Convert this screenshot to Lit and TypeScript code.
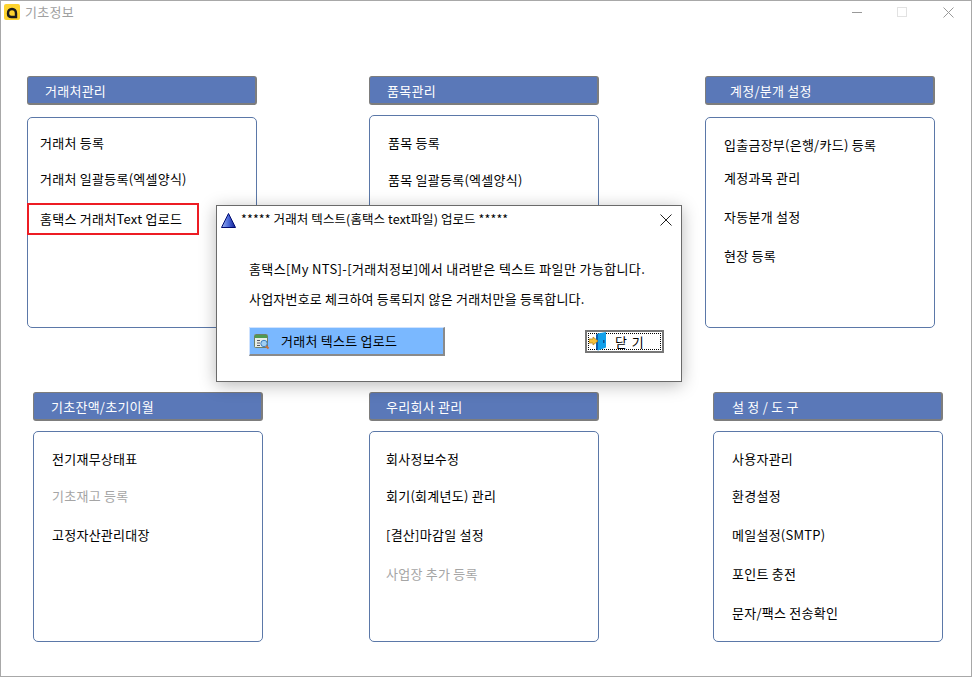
import { LitElement, html, css, svg } from "lit";
import { customElement } from "lit/decorators.js";

interface Item { label: string; y: number; off?: boolean; hl?: boolean }
interface Panel { title: string; ti: number; bi: number; bodyGap: number; top: number; items: Item[] }

const row1: Panel[] = [
  { title: "거래처관리", ti: 17, bi: 12, bodyGap: 12, top: 117, items: [
    { label: "거래처 등록", y: 143 },
    { label: "거래처 일괄등록(엑셀양식)", y: 179 },
    { label: "홈택스 거래처Text 업로드", y: 219, hl: true },
  ]},
  { title: "품목관리", ti: 17, bi: 18, bodyGap: 10, top: 115, items: [
    { label: "품목 등록", y: 143 },
    { label: "품목 일괄등록(엑셀양식)", y: 180 },
  ]},
  { title: "계정/분개 설정", ti: 24, bi: 18, bodyGap: 12, top: 117, items: [
    { label: "입출금장부(은행/카드) 등록", y: 145 },
    { label: "계정과목 관리", y: 178 },
    { label: "자동분개 설정", y: 217 },
    { label: "현장 등록", y: 256 },
  ]},
];
const row2: Panel[] = [
  { title: "기초잔액/초기이월", ti: 17, bi: 18, bodyGap: 10, top: 431, items: [
    { label: "전기재무상태표", y: 459 },
    { label: "기초재고 등록", y: 496, off: true },
    { label: "고정자산관리대장", y: 535 },
  ]},
  { title: "우리회사 관리", ti: 16, bi: 16, bodyGap: 10, top: 431, items: [
    { label: "회사정보수정", y: 459 },
    { label: "회기(회계년도) 관리", y: 496 },
    { label: "[결산]마감일 설정", y: 535 },
    { label: "사업장 추가 등록", y: 574, off: true },
  ]},
  { title: "설 정 / 도 구", ti: 18, bi: 18, bodyGap: 10, top: 431, items: [
    { label: "사용자관리", y: 459 },
    { label: "환경설정", y: 496 },
    { label: "메일설정(SMTP)", y: 535 },
    { label: "포인트 충전", y: 574 },
    { label: "문자/팩스 전송확인", y: 613 },
  ]},
];

const logo = html`<svg width="16" height="16" viewBox="0 0 16 16"><rect width="16" height="16" rx="2" fill="#fdd32f"/><path d="M4 9.500C4 6.500 5.500 5 8 5s4 1.500 4 4.500V13H7.500C5 13 4 11.500 4 9.500Z" fill="none" stroke="#1a1a1a" stroke-width="2.400"/></svg>`;
const tri = html`<svg width="15" height="15" viewBox="0 0 15 15"><defs><linearGradient id="t" x1="0" x2="1"><stop offset="0" stop-color="#9db4f0"/><stop offset=".5" stop-color="#4a68d8"/><stop offset="1" stop-color="#101c90"/></linearGradient></defs><path d="M7.500 .5 14.500 14.500H.5Z" fill="url(#t)" stroke="#000a70"/></svg>`;
const formIcon = html`<svg class="fi" width="16" height="16" viewBox="0 0 16 16"><rect x=".5" y=".5" width="13" height="13" rx="1" fill="#e8eee6" stroke="#6f7f66"/><rect x="1" y="1" width="12" height="3" fill="#4f9a50"/><path d="M3 6.500h3M3 9h3M3 11.500h3" stroke="#556"/><circle cx="10" cy="9.500" r="3.200" fill="#9fcff2" stroke="#3d7fc0"/><path d="M12 12l2.500 2.500" stroke="#c8703a" stroke-width="2"/></svg>`;
const door = html`<svg class="door" width="18" height="19" viewBox="0 0 18 19"><path d="M9 1.500 17 0V15.500L9 18.500Z" fill="#12a0ea"/><path d="M9 1.500V18.500L7 17V2.500Z" fill="#0a5fb0"/><rect x="14" y="8" width="1.500" height="3" fill="#0a4f90"/><path d="M0 7h4V5l5 4-5 4v-2H0Z" fill="#f4c23c" stroke="#a87a18" stroke-width=".7"/></svg>`;

@customElement("app-root")
export class AppRoot extends LitElement {
  static styles = css`
    :host { display: block; width: 972px; height: 677px; overflow: hidden; background: #fff; }
    * { box-sizing: border-box; }
    .win {
      position: relative; width: 972px; height: 677px; background: #fff;
      border: 1px solid #a8a8a8;
      font-family: "Noto Sans CJK KR", "Liberation Sans", sans-serif; font-size: 13px; letter-spacing: .25px; color: #000;
    }
    .bar { height: 24px; display: flex; align-items: center; padding: 0 0 2px 3px; }
    .bar .name { margin-left: 5px; color: #a0a0a0; line-height: 20px; }
    .bar .ctl { margin-left: auto; display: flex; align-items: center; }
    .min { width: 10px; height: 1px; background: #999; }
    .max { width: 10px; height: 10px; border: 1px solid #e2e2e2; margin-left: 35px; }
    .x { margin-left: 36px; margin-right: 17px; display: block; }
    .row { display: flex; }
    .row.a { padding-left: 26px; margin-top: 51px; gap: 112px; }
    .row.a .col:nth-child(2) { margin-right: -6px; }
    .row.b { padding-left: 32px; margin-top: 64px; }
    .row.b .col:nth-child(2) { margin-left: 106px; }
    .row.b .col:nth-child(3) { margin-left: 114px; }
    .col { width: 230px; }
    .head {
      height: 29px; background: #5a78b8; color: #fff; border: 1px solid #7d7d7d;
      border-width: 1px 2px 2px 1px; border-radius: 3px; line-height: 27px; white-space: pre;
    }
    .body { height: 211px; border: 1px solid #5b78a8; border-radius: 5px; }
    .item { height: 20px; line-height: 20px; white-space: pre; }
    .item.off { color: #a5a5a5; }
    .item.hl {
      height: 32px; line-height: 28px; width: 172px; border: 2px solid #ed1c24;
      margin-bottom: -6px; padding-left: 11px; position: relative; top: -6px;
      background: #fff;
    }
    .dlg {
      position: absolute; left: 215px; top: 204px; width: 466px; height: 177px;
      background: #fff; border: 1px solid #6a6a6a; box-shadow: 0 3px 16px rgba(0,0,0,.28);
      padding: 0 0 0 32px;
    }
    .dh {
      margin-left: -28px; padding-top: 3px; display: flex; align-items: center; height: 23px;
      gap: 5px; font-size: 12.5px; letter-spacing: .1px; line-height: 16px; white-space: pre;
    }
    .dh svg { flex: none; margin-top: 2px; }
    .dh .cx { margin-left: auto; margin-right: 9px; display: block; }
    .msg { line-height: 20px; height: 20px; white-space: pre; }
    .msg.one { margin-top: 30px; letter-spacing: .37px; }
    .msg.two { margin-top: 10px; letter-spacing: .2px; }
    .acts { display: flex; align-items: flex-start; margin-top: 18px; }
    .up {
      width: 196px; height: 29px; background: #7ab8ff; border: 1px solid #8a8a8a;
      border-width: 1px 2px 2px 1px; border-top-color: #cfe3ff; border-left-color: #cfe3ff;
      display: flex; align-items: center; gap: 11px; padding: 0 0 0 4px; font: inherit; letter-spacing: inherit; color: #000;
    }
    .up .lb { line-height: 20px; margin-top: -1px; }
    .fi { flex: none; margin-top: 1px; }
    .close {
      position: relative; margin-left: 140px; margin-top: 3px; width: 79px; height: 23px;
      border: 2px solid #777; background: #fff; padding: 1px; color: #000; cursor: default;
    }
    .close .in {
      display: flex; align-items: center; height: 100%; border: 1px dotted #000;
      padding-left: 26px; white-space: pre;
    }
    .door { position: absolute; left: 2px; top: 0; }
    .close .t { letter-spacing: 1px; line-height: 15px; margin-top: -1px; }
  `;

  private panel(p: Panel) {
    const pad = p.items[0].y - 10 - p.top - 1;
    return html`<section class="col">
      <div class="head" style="padding-left:${p.ti}px">${p.title}</div>
      <div class="body" style="margin-top:${p.bodyGap}px;padding:${pad}px 0 0 ${p.bi}px;">
        ${p.items.map((it, i) => html`<div
          class="item ${it.off ? "off" : ""} ${it.hl ? "hl" : ""}"
          style="margin-top:${i === 0 ? 0 : it.y - p.items[i - 1].y - 20}px;${it.hl ? `margin-left:${-p.bi - 1}px;` : ""}"
        >${it.label}</div>`)}
      </div>
    </section>`;
  }

  render() {
    return html`<div class="win">
      <header class="bar">
        ${logo}<span class="name">기초정보</span>
        <div class="ctl">
          <div class="min"></div><div class="max"></div>
          <svg class="x" width="11" height="11" viewBox="0 0 11 11"><path d="M.5.5l10 10M10.500.5l-10 10" stroke="#999"/></svg>
        </div>
      </header>
      <div class="row a">${row1.map((p) => this.panel(p))}</div>
      <div class="row b">${row2.map((p) => this.panel(p))}</div>
      <div class="dlg">
        <div class="dh">${tri}<span>***** 거래처 텍스트(홈택스 text파일) 업로드 *****</span>
          <svg class="cx" width="12" height="12" viewBox="0 0 12 12"><path d="M.5.5l11 11M11.500.5l-11 11" stroke="#222"/></svg>
        </div>
        <div class="msg one">홈택스[My NTS]-[거래처정보]에서 내려받은 텍스트 파일만 가능합니다.</div>
        <div class="msg two">사업자번호로 체크하여 등록되지 않은 거래처만을 등록합니다.</div>
        <div class="acts">
          <button class="up">${formIcon}<span class="lb">거래처 텍스트 업로드</span></button>
          <div class="close" role="button">${door}<span class="in"><span class="t">닫 기</span></span></div>
        </div>
      </div>
    </div>`;
  }
}
